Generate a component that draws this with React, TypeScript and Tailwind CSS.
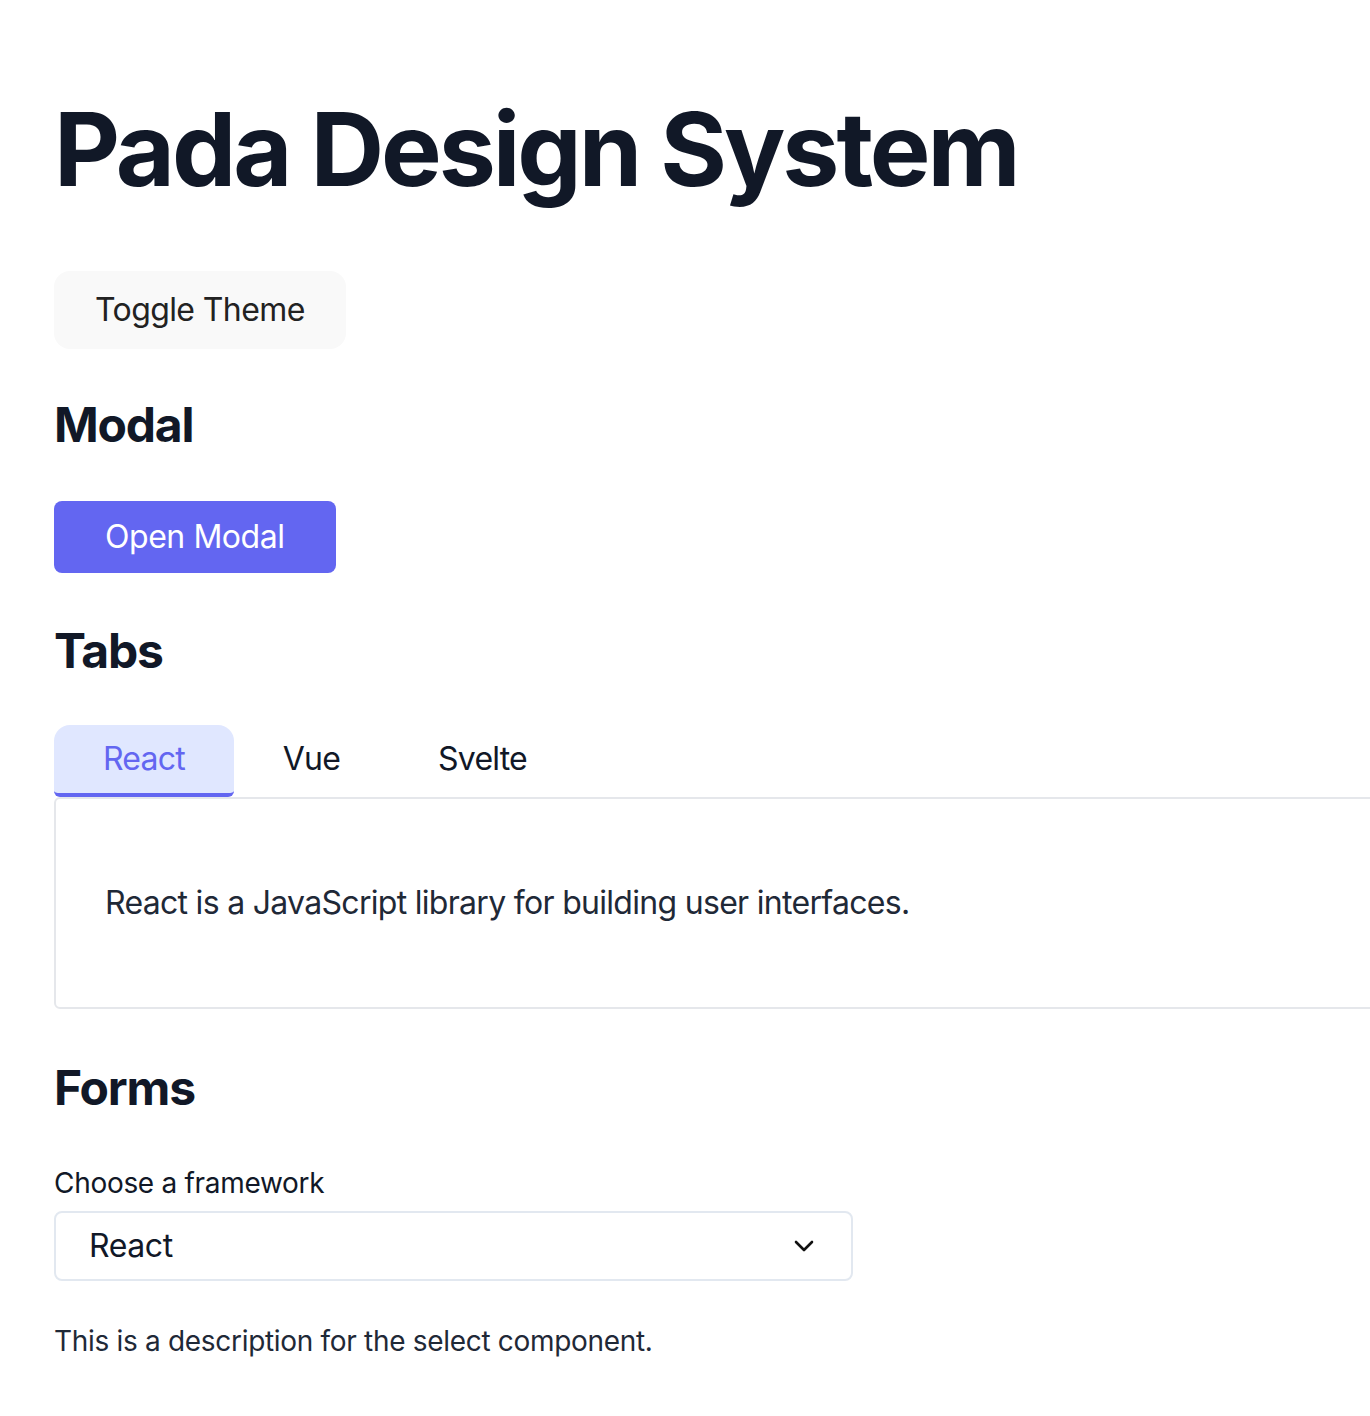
import { useState } from "react";

const tabs = [
  { id: "react", label: "React", body: "React is a JavaScript library for building user interfaces." },
  { id: "vue", label: "Vue", body: "Vue is a progressive framework for building user interfaces." },
  { id: "svelte", label: "Svelte", body: "Svelte is a compiler for building user interfaces." },
];

const App = () => {
  const [active, setActive] = useState("react");
  const current = tabs.find((t) => t.id === active) ?? tabs[0];

  return (
    <div
      className="min-h-screen overflow-hidden bg-white text-[#111827]"
      style={{ fontFamily: "Inter, 'Noto Sans', sans-serif" }}
    >
      <div className="pl-[54px] pt-[98px] pb-16">
        <h1 className="text-[102px] font-bold leading-none tracking-[-0.03em]">
          Pada Design System
        </h1>

        <button className="mt-[71px] h-[78px] px-[41px] rounded-2xl bg-[#f9f9f9] text-[32px] text-[#222222] tracking-[-0.6px]">
          Toggle Theme
        </button>

        <h2 className="mt-[52px] text-[48px] font-bold leading-[48px] tracking-[-0.025em]">Modal</h2>
        <button className="mt-[52px] h-[72px] px-[51px] rounded-lg bg-[#6366f1] text-[32px] text-white tracking-[-0.45px]">
          Open Modal
        </button>

        <h2 className="mt-[54px] text-[48px] font-bold leading-[48px] tracking-[-0.025em]">Tabs</h2>
        <div className="mt-[50px]">
          <div className="flex">
            {tabs.map((tab) => (
              <button
                key={tab.id}
                onClick={() => setActive(tab.id)}
                className={
                  tab.id === active
                    ? "h-[72px] px-[49px] rounded-t-2xl rounded-b-md border-b-4 border-[#6366f1] bg-[#e0e7ff] text-[32px] text-[#6366f1] tracking-[-0.8px]"
                    : "h-[72px] px-[49px] border-b-4 border-transparent text-[32px] text-[#111827] tracking-[-0.8px]"
                }
              >
                {tab.label}
              </button>
            ))}
          </div>
          <div className="w-[1400px] h-[212px] border-2 border-[#e5e7eb] rounded-md flex items-center px-[49px]">
            <p className="text-[32px] text-[#1f2937] tracking-[-0.7px]">{current.body}</p>
          </div>
        </div>

        <h2 className="mt-[55px] text-[48px] font-bold leading-[48px] tracking-[-0.025em]">Forms</h2>
        <label className="block mt-[53px] text-[28px] leading-[36px] text-[#111827] tracking-[-0.3px]">
          Choose a framework
        </label>
        <div className="mt-[10px] relative w-[799px] h-[70px] border-2 border-[#e2e8f0] rounded-lg flex items-center justify-between pl-[33px] pr-[36px]">
          <span className="text-[32px] text-[#111827] tracking-[-0.4px]">React</span>
          <svg width="22" height="14" viewBox="0 0 22 14" fill="none">
            <path d="M3 3l8 8 8-8" stroke="#111" strokeWidth="2.6" strokeLinecap="round" strokeLinejoin="round" />
          </svg>
        </div>
        <p className="mt-[42px] text-[28px] leading-[36px] text-[#1f2937] tracking-[-0.31px]">
          This is a description for the select component.
        </p>
      </div>
    </div>
  );
};

export default App;
